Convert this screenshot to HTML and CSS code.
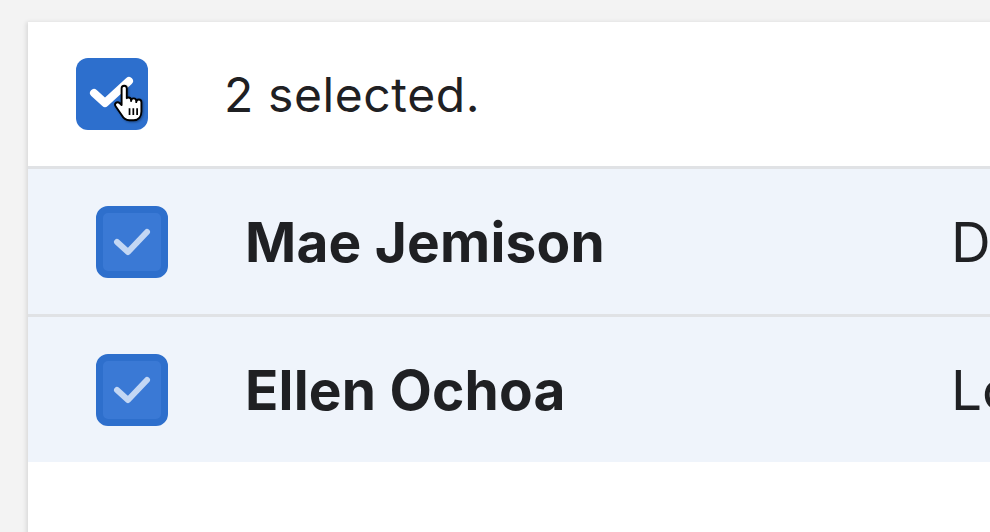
FILE: index.html
```html
<!DOCTYPE html>
<html>
<head>
<meta charset="utf-8">
<link rel="stylesheet" href="styles.css">
</head>
<body>
<div class="card">
  <div class="header">
    <div class="cb cb-head">
      <svg class="check" viewBox="0 0 72 72" width="72" height="72"><path d="M18 35 L29 45 L53 23" fill="none" stroke="#fff" stroke-width="8" stroke-linecap="round" stroke-linejoin="round"/></svg>
      <svg class="cursor" viewBox="0 0 18 22" width="31" height="38"><path d="M6.5 1 C5.7 1 5 1.7 5 2.5 V12.2 L3.8 11 C3.2 10.4 2.2 10.4 1.6 11 C1.1 11.5 1.1 12.3 1.5 12.9 L5 18 C6 19.8 7.5 21 9.5 21 H12 C14.8 21 16.5 19 16.5 16 V10.5 C16.5 9.7 15.8 9 15 9 C14.2 9 13.5 9.7 13.5 10.5 V9.8 C13.5 9 12.8 8.3 12 8.3 C11.2 8.3 10.5 9 10.5 9.8 V9.3 C10.5 8.5 9.8 7.8 9 7.8 C8.5 7.8 8.2 8 8 8.2 V2.5 C8 1.7 7.3 1 6.5 1 Z" fill="#fff" stroke="#000" stroke-width="1.1" stroke-linejoin="round"/><path d="M9.6 14 V18 M11.8 14 V18 M14 14 V18" stroke="#000" stroke-width="1"/></svg>
    </div>
    <div class="count">2 selected.</div>
  </div>
  <div class="row">
    <div class="cb cb-row">
      <svg viewBox="0 0 58 58" width="58" height="58"><path d="M14 29 L25 39 L44 19" fill="none" stroke="#c3d7f4" stroke-width="6" stroke-linecap="round" stroke-linejoin="round"/></svg>
    </div>
    <div class="name">Mae Jemison</div>
    <div class="role">Doctor</div>
  </div>
  <div class="row row-last">
    <div class="cb cb-row">
      <svg viewBox="0 0 58 58" width="58" height="58"><path d="M14 29 L25 39 L44 19" fill="none" stroke="#c3d7f4" stroke-width="6" stroke-linecap="round" stroke-linejoin="round"/></svg>
    </div>
    <div class="name">Ellen Ochoa</div>
    <div class="role">Lockheed</div>
  </div>
  <div class="rest"></div>
</div>
</body>
</html>
```
FILE: styles.css
```css
html, body {
  margin: 0;
  padding: 0;
  overflow: hidden;
}
body {
  background: #f3f3f3;
  font-family: Inter, "Noto Sans", "Liberation Sans", sans-serif;
  color: #1f2023;
  width: 990px;
  height: 532px;
}
.card {
  margin: 22px 0 0 28px;
  width: 1200px;
  background: #fff;
  box-shadow: -2px 0 4px rgba(0,0,0,0.1);
}
.header {
  height: 144px;
  display: flex;
  align-items: center;
  padding-left: 48px;
  border-bottom: 3px solid #e0e2e5;
}
.cb {
  width: 72px;
  height: 72px;
  box-sizing: border-box;
  border-radius: 12px;
  flex: none;
  position: relative;
}
.cb-head {
  background: #2d6fcd;
}
.cb-head .check {
  display: block;
}
.cursor {
  position: absolute;
  left: 37px;
  top: 26px;
  filter: drop-shadow(1px 1px 1px rgba(0,0,0,0.35));
}
.count {
  margin-left: 76px;
  font-size: 48px;
  font-weight: 400;
  letter-spacing: 0.6px;
}
.row {
  height: 145px;
  display: flex;
  align-items: center;
  padding-left: 68px;
  background: #eff4fb;
  border-bottom: 3px solid #e0e2e5;
}
.row-last {
  border-bottom: none;
}
.cb-row {
  border: 7px solid #2e6fcc;
  background: #3a79d5;
}
.cb-row svg {
  display: block;
}
.name {
  margin-left: 77px;
  width: 706px;
  flex: none;
  font-size: 55px;
  font-weight: 700;
  letter-spacing: 0.2px;
}
.role {
  flex: none;
  font-size: 55px;
  font-weight: 400;
  white-space: nowrap;
}
.rest {
  height: 80px;
}
```
